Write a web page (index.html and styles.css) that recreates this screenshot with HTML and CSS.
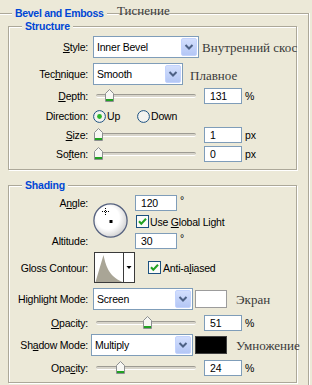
FILE: index.html
```html
<!DOCTYPE html>
<html>
<head>
<meta charset="utf-8">
<link rel="stylesheet" href="styles.css">
</head>
<body>
<div class="outer">
  <span class="legend legend-outer">Bevel and Emboss</span>
  <span class="note note-title">Тиснение</span>

  <div class="group structure">
    <span class="legend">Structure</span>

    <div class="row h22">
      <span class="lbl"><u>S</u>tyle:</span>
      <div class="select w-style"><span class="val">Inner Bevel</span><span class="btn"><svg width="14" height="16" viewBox="0 0 14 16"><path d="M3.5 6 L7 9.5 L10.5 6" stroke="#4D6185" stroke-width="2" fill="none"/></svg></span></div>
      <span class="note n-style">Внутренний скос</span>
    </div>

    <div class="row h22 mt5">
      <span class="lbl">Tec<u>h</u>nique:</span>
      <div class="select w-tech"><span class="val">Smooth</span><span class="btn"><svg width="14" height="16" viewBox="0 0 14 16"><path d="M3.5 6 L7 9.5 L10.5 6" stroke="#4D6185" stroke-width="2" fill="none"/></svg></span></div>
      <span class="note n-tech">Плавное</span>
    </div>

    <div class="row h16 mt3">
      <span class="lbl"><u>D</u>epth:</span>
      <div class="slider"><div class="track"><span class="thumb" style="left:13.1%"><svg width="9" height="13" viewBox="0 0 9 13"><polygon points="0.5,4.5 4.5,0.5 8.5,4.5 8.5,12.5 0.5,12.5" fill="#F7F7F3" stroke="#8C8F91"/><rect x="1" y="10" width="7" height="2" fill="#21A121"/></svg></span></div></div>
      <div class="num">131</div>
      <span class="unit">%</span>
    </div>

    <div class="row h16 mt4">
      <span class="lbl">Direction:</span>
      <span class="opt opt-up"><svg width="13" height="13" viewBox="0 0 13 13"><circle cx="6.5" cy="6.5" r="5.9" fill="#F3F3EF" stroke="#1C5180"/><circle cx="6.5" cy="6.5" r="2.4" fill="#2BB52B"/></svg><span>Up</span></span>
      <span class="opt"><svg width="13" height="13" viewBox="0 0 13 13"><circle cx="6.5" cy="6.5" r="5.9" fill="#F3F3EF" stroke="#1C5180"/></svg><span>Down</span></span>
    </div>

    <div class="row h16 mt3">
      <span class="lbl"><u>S</u>ize:</span>
      <div class="slider"><div class="track"><span class="thumb" style="left:2%"><svg width="9" height="13" viewBox="0 0 9 13"><polygon points="0.5,4.5 4.5,0.5 8.5,4.5 8.5,12.5 0.5,12.5" fill="#F7F7F3" stroke="#8C8F91"/><rect x="1" y="10" width="7" height="2" fill="#21A121"/></svg></span></div></div>
      <div class="num">1</div>
      <span class="unit">px</span>
    </div>

    <div class="row h16 mt3">
      <span class="lbl">So<u>f</u>ten:</span>
      <div class="slider"><div class="track"><span class="thumb" style="left:2%"><svg width="9" height="13" viewBox="0 0 9 13"><polygon points="0.5,4.5 4.5,0.5 8.5,4.5 8.5,12.5 0.5,12.5" fill="#F7F7F3" stroke="#8C8F91"/><rect x="1" y="10" width="7" height="2" fill="#21A121"/></svg></span></div></div>
      <div class="num">0</div>
      <span class="unit">px</span>
    </div>
  </div>

  <div class="group shading">
    <span class="legend">Shading</span>

    <div class="angle-block">
      <div class="angle-labels">
        <span class="lbl-line">A<u>n</u>gle:</span>
        <span class="lbl-line">Altitude:</span>
      </div>
      <svg class="dial" width="35" height="35" viewBox="0 0 35 35">
        <defs><radialGradient id="dialg" cx="42%" cy="42%" r="62%"><stop offset="0.55" stop-color="#ffffff"/><stop offset="1" stop-color="#cfcfcf"/></radialGradient></defs>
        <circle cx="17.5" cy="17.5" r="16.6" fill="url(#dialg)" stroke="#56627F" stroke-width="1.3"/>
        <rect x="16.5" y="17" width="3" height="3" fill="#000"/>
        <line x1="9" y1="8.5" x2="16" y2="8.5" stroke="#000" stroke-dasharray="1 1"/>
        <line x1="12.5" y1="5" x2="12.5" y2="12" stroke="#000" stroke-dasharray="1 1"/>
      </svg>
      <div class="angle-controls">
        <div class="crow h16"><div class="num w-angle">120</div><span class="deg">°</span></div>
        <div class="crow h13 mt4"><span class="check"><svg width="13" height="13" viewBox="0 0 13 13"><rect x="0.5" y="0.5" width="12" height="12" fill="#FBFBF8" stroke="#1C5180"/><path d="M3 6.3 L5.3 8.8 L10 3.8" stroke="#21A121" stroke-width="2" fill="none"/></svg><span>Use <u>G</u>lobal Light</span></span></div>
        <div class="crow h16 mt5"><div class="num w-angle">30</div><span class="deg">°</span></div>
      </div>
    </div>

    <div class="row h31 mt3">
      <span class="lbl">Gloss Contour:</span>
      <svg class="contour" width="41" height="31" viewBox="0 0 41 31">
        <rect x="0.5" y="0.5" width="40" height="30" fill="#fff" stroke="#3A3A3A"/>
        <path d="M1.5 30 L9.5 3 C11.5 12, 14 24, 28.5 30 Z" fill="#A9A596"/>
        <line x1="29.5" y1="0.5" x2="29.5" y2="30.5" stroke="#3A3A3A"/>
        <path d="M32.5 14 L37.5 14 L35 17 Z" fill="#000"/>
      </svg>
      <span class="check check-aa"><svg width="13" height="13" viewBox="0 0 13 13"><rect x="0.5" y="0.5" width="12" height="12" fill="#FBFBF8" stroke="#1C5180"/><path d="M3 6.3 L5.3 8.8 L10 3.8" stroke="#21A121" stroke-width="2" fill="none"/></svg><span>Anti-a<u>l</u>iased</span></span>
    </div>

    <div class="row h22 mt5">
      <span class="lbl">Highlight Mode:</span>
      <div class="select w-mode"><span class="val">Screen</span><span class="btn"><svg width="14" height="16" viewBox="0 0 14 16"><path d="M3.5 6 L7 9.5 L10.5 6" stroke="#4D6185" stroke-width="2" fill="none"/></svg></span></div>
      <span class="swatch sw-white"></span>
      <span class="note n-mode">Экран</span>
    </div>

    <div class="row h16 mt5">
      <span class="lbl"><u>O</u>pacity:</span>
      <div class="slider"><div class="track"><span class="thumb" style="left:51%"><svg width="9" height="13" viewBox="0 0 9 13"><polygon points="0.5,4.5 4.5,0.5 8.5,4.5 8.5,12.5 0.5,12.5" fill="#F7F7F3" stroke="#8C8F91"/><rect x="1" y="10" width="7" height="2" fill="#21A121"/></svg></span></div></div>
      <div class="num">51</div>
      <span class="unit">%</span>
    </div>

    <div class="row h22 mt3">
      <span class="lbl">Sh<u>a</u>dow Mode:</span>
      <div class="select w-mode sel-shadow"><span class="val">Multiply</span><span class="btn"><svg width="14" height="16" viewBox="0 0 14 16"><path d="M3.5 6 L7 9.5 L10.5 6" stroke="#4D6185" stroke-width="2" fill="none"/></svg></span></div>
      <span class="swatch sw-black"></span>
      <span class="note n-mode">Умножение</span>
    </div>

    <div class="row h16 mt4">
      <span class="lbl">Opa<u>c</u>ity:</span>
      <div class="slider"><div class="track"><span class="thumb" style="left:24%"><svg width="9" height="13" viewBox="0 0 9 13"><polygon points="0.5,4.5 4.5,0.5 8.5,4.5 8.5,12.5 0.5,12.5" fill="#F7F7F3" stroke="#8C8F91"/><rect x="1" y="10" width="7" height="2" fill="#21A121"/></svg></span></div></div>
      <div class="num">24</div>
      <span class="unit">%</span>
    </div>
  </div>
</div>
</body>
</html>
```

FILE: styles.css
```css
* { box-sizing: border-box; }
html, body { margin: 0; padding: 0; }
body {
  width: 312px;
  height: 385px;
  overflow: hidden;
  background: #ECE9D8;
  font-family: "Liberation Sans", Arial, sans-serif;
  font-size: 10.5px;
  letter-spacing: -0.2px;
  color: #000;
}

.outer {
  position: relative;
  margin: 13px 0 0 -6px;
  width: 315px;
  height: 372px;
  border: 1px solid #ACA899;
  border-bottom: none;
  box-shadow: inset 1px 1px 0 #fff, 1px 0 0 #fff;
  padding: 12px 11px 0 13px;
}

.group {
  position: relative;
  border: 1px solid #ACA899;
  box-shadow: inset 1px 1px 0 #fff, 1px 1px 0 #fff;
}
.structure { padding: 9px 0 7px 0; }
.shading { margin-top: 15px; padding: 9px 0 6px 0; }

.legend {
  position: absolute;
  top: -7px;
  left: 13px;
  padding: 0 3px;
  line-height: 12px;
  background: #ECE9D8;
  color: #0046D5;
  font-weight: bold;
  white-space: nowrap;
}
.legend-outer { left: 17px; letter-spacing: -0.3px; }

.note {
  font-family: "Liberation Serif", "Times New Roman", serif;
  font-size: 13px;
  letter-spacing: 0;
  color: #3a3a3a;
  white-space: nowrap;
  line-height: 13px;
}
.note-title { position: absolute; left: 122px; top: -10px; }
.n-style { margin-left: 3px; }
.n-tech { margin-left: 7px; margin-top: 3px; }
.n-mode { margin-left: 9px; }

.row { display: flex; align-items: center; }
.h13 { height: 13px; }
.h16 { height: 16px; }
.h22 { height: 22px; }
.h31 { height: 31px; }
.mt3 { margin-top: 3px; }
.mt4 { margin-top: 4px; }
.mt5 { margin-top: 5px; }

.lbl {
  flex: none;
  width: 79px;
  margin-right: 5px;
  text-align: right;
  white-space: nowrap;
}

.select {
  flex: none;
  display: flex;
  align-items: center;
  height: 22px;
  border: 1px solid #7F9DB9;
  background: #fff;
  padding: 1px;
}
.select .val { flex: 1; padding-left: 2px; white-space: nowrap; }
.select .btn {
  flex: none;
  width: 16px;
  height: 18px;
  border: 1px solid #C3D3FD;
  border-radius: 2px;
  background: linear-gradient(#D3DFFD, #B4C7F5);
  display: flex;
  align-items: center;
  justify-content: center;
}
.w-style { width: 106px; }
.w-tech { width: 90px; }
.w-mode { width: 100px; }
.sel-shadow { margin-left: -2px; width: 102px; }

.slider {
  flex: none;
  width: 106px;
  height: 16px;
  padding: 0 3px;
  margin-right: 5px;
  display: flex;
  align-items: center;
}
.track {
  position: relative;
  width: 100px;
  height: 4px;
  border-top: 1px solid #9D9B93;
  border-bottom: 1px solid #fff;
  background: #D8D5CB;
  border-radius: 2px;
}
.thumb {
  position: absolute;
  top: -6px;
  margin-left: -4.5px;
  width: 9px;
  height: 13px;
  display: block;
}
.thumb svg { display: block; }

.num {
  flex: none;
  width: 38px;
  height: 16px;
  border: 1px solid #7F9DB9;
  background: #fff;
  padding-left: 5px;
  line-height: 14px;
}
.w-angle { width: 42px; }
.unit { margin-left: 3px; }
.deg { margin-left: 3px; align-self: flex-start; line-height: 10px; }

.opt { display: flex; align-items: center; gap: 1px; }
.opt-up { width: 44px; }
.opt svg, .check svg { flex: none; display: block; }

.check { display: flex; align-items: center; gap: 1px; white-space: nowrap; }

.angle-block { display: flex; height: 54px; }
.angle-labels {
  flex: none;
  width: 79px;
  display: flex;
  flex-direction: column;
  justify-content: space-between;
  text-align: right;
}
.lbl-line { line-height: 16px; }
.dial { flex: none; margin: 8px 0 0 5px; display: block; }
.angle-controls { margin-left: 7px; display: flex; flex-direction: column; }
.crow { display: flex; align-items: center; }
.crow .check { margin-left: 1px; }

.contour { flex: none; display: block; margin-left: 1px; }
.check-aa { margin-left: 13px; gap: 2px; }

.swatch { flex: none; width: 32px; height: 18px; margin-left: 2px; }
.sw-white { background: #fff; border: 1px solid #9C9C9C; }
.sw-black { background: #000; border: 1px solid #404040; }
```
